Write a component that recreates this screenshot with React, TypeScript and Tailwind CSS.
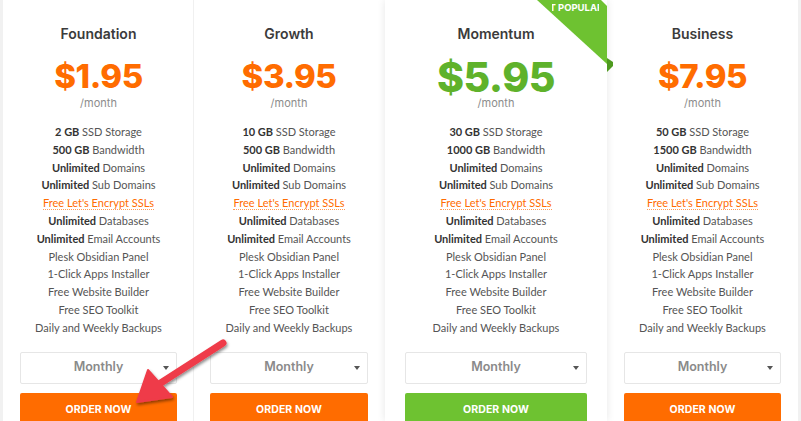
import type { ReactNode } from "react";

type Plan = {
  name: string;
  price: string;
  storage: string;
  bandwidth: string;
  featured?: boolean;
};

const plans: Plan[] = [
  { name: "Foundation", price: "$1.95", storage: "2 GB", bandwidth: "500 GB" },
  { name: "Growth", price: "$3.95", storage: "10 GB", bandwidth: "500 GB" },
  { name: "Momentum", price: "$5.95", storage: "30 GB", bandwidth: "1000 GB", featured: true },
  { name: "Business", price: "$7.95", storage: "50 GB", bandwidth: "1500 GB" },
];

function Feature({ bold, children }: { bold?: string; children: ReactNode }) {
  return (
    <li className="whitespace-nowrap">
      {bold && <span className="font-bold text-[#333]">{bold} </span>}
      {children}
    </li>
  );
}

// contenu d'une carte (titre, prix, liste, select, bouton)
function PlanBody({ plan }: { plan: Plan }) {
  const green = plan.featured;
  return (
    <div className="flex flex-col items-center">
      <h3 className="mt-[26px] text-[14px] leading-[16px] font-semibold text-[#3b3b3b]">{plan.name}</h3>
      <div
        className={
          green
            ? "mt-[17px] text-[41px] leading-[37px] font-extrabold tracking-[-0.5px] text-[#5fb22b]"
            : "mt-[17px] text-[33px] leading-[34px] font-extrabold tracking-[-0.5px] text-[#ff6c00]"
        }
      >
        {plan.price}
      </div>
      <div className={green ? "mt-0 text-[11px] leading-[14px] text-[#8c8c8c]" : "mt-[3px] text-[11px] leading-[14px] text-[#8c8c8c]"}>
        /month
      </div>
      <ul className="mt-[13px] text-center text-[11px] leading-[17.8px] text-[#555] font-['Lato',sans-serif]">
        <Feature bold={plan.storage}>SSD Storage</Feature>
        <Feature bold={plan.bandwidth}>Bandwidth</Feature>
        <Feature bold="Unlimited">Domains</Feature>
        <Feature bold="Unlimited">Sub Domains</Feature>
        <li className="whitespace-nowrap text-[#ff6c00]">
          <span className="border-b border-dotted border-[#ff9a55]">Free Let's Encrypt SSLs</span>
        </li>
        <Feature bold="Unlimited">Databases</Feature>
        <Feature bold="Unlimited">Email Accounts</Feature>
        <Feature>Plesk Obsidian Panel</Feature>
        <Feature>1-Click Apps Installer</Feature>
        <Feature>Free Website Builder</Feature>
        <Feature>Free SEO Toolkit</Feature>
        <Feature>Daily and Weekly Backups</Feature>
      </ul>
      <div className="mt-[15px] w-full h-[32px] rounded-[2px] border border-[#e6e6e6] bg-white flex items-center justify-center relative">
        <span className="text-[12.5px] font-semibold text-[#8a8a8a]">Monthly</span>
        <span className="absolute right-[7px] top-[13px] w-0 h-0 border-l-[3px] border-r-[3px] border-t-[4px] border-l-transparent border-r-transparent border-t-[#555]" />
      </div>
      <button
        className={
          "mt-[9px] w-full h-[34px] rounded-t-[2px] text-white text-[10.5px] font-bold tracking-[0.1px] " +
          (green ? "bg-[#6ec231]" : "bg-[#ff6c00]")
        }
      >
        ORDER NOW
      </button>
    </div>
  );
}

function Ribbon() {
  return (
    <div className="absolute top-0 right-[-6px] w-[82px] h-[74px] overflow-hidden pointer-events-none">
      <svg width="82" height="74" viewBox="0 0 82 74" className="absolute inset-0">
        <polygon points="6,0 70,0 76,6 76,64" fill="#6ec231" />
        <polygon points="76,58 82,62 82,66 76,72" fill="#4e9a1f" />
      </svg>
      {/* le début du texte passe sous le bord, comme sur la capture */}
      <div className="absolute left-[21px] top-[2px] w-[47px] h-[12px] overflow-hidden">
        <span className="absolute left-[-25px] top-0 text-[9.5px] leading-[12px] font-bold text-white whitespace-nowrap">
          MOST POPULAR
        </span>
      </div>
    </div>
  );
}

function Arrow() {
  return (
    <svg width="801" height="421" className="absolute inset-0 pointer-events-none">
      <defs>
        <filter id="sh" x="-20%" y="-20%" width="140%" height="140%">
          <feDropShadow dx="1" dy="2" stdDeviation="1.5" floodColor="#000" floodOpacity="0.45" />
        </filter>
      </defs>
      <g filter="url(#sh)">
        <line x1="223" y1="343" x2="156" y2="386" stroke="#ef3b48" strokeWidth="7" strokeLinecap="round" />
        <polygon points="148,370 137,402 172,397" fill="#ef3b48" stroke="#ef3b48" strokeWidth="2" strokeLinejoin="round" />
      </g>
    </svg>
  );
}

export default function App() {
  return (
    <div className="relative w-[801px] h-[421px] overflow-hidden bg-white flex font-['Inter',sans-serif]">
      <div className="w-[3px] shrink-0 bg-[#f1f1f1]" />
      <div className="w-[191px] shrink-0 border-r border-[#f0f0f0] pl-[17px] pr-[16px]">
        <PlanBody plan={plans[0]} />
      </div>
      <div className="w-[191px] shrink-0 pl-[16px] pr-[17px]">
        <PlanBody plan={plans[1]} />
      </div>
      <div className="relative z-10 w-[222px] shrink-0 px-[20px] bg-white shadow-[0_0_8px_rgba(0,0,0,0.10)]">
        <PlanBody plan={plans[2]} />
        <Ribbon />
      </div>
      <div className="w-[5px] shrink-0" />
      <div className="w-[186px] shrink-0 pl-[12px] pr-[17px]">
        <PlanBody plan={plans[3]} />
      </div>
      <div className="w-[3px] shrink-0 bg-[#f1f1f1]" />
      <Arrow />
    </div>
  );
}
